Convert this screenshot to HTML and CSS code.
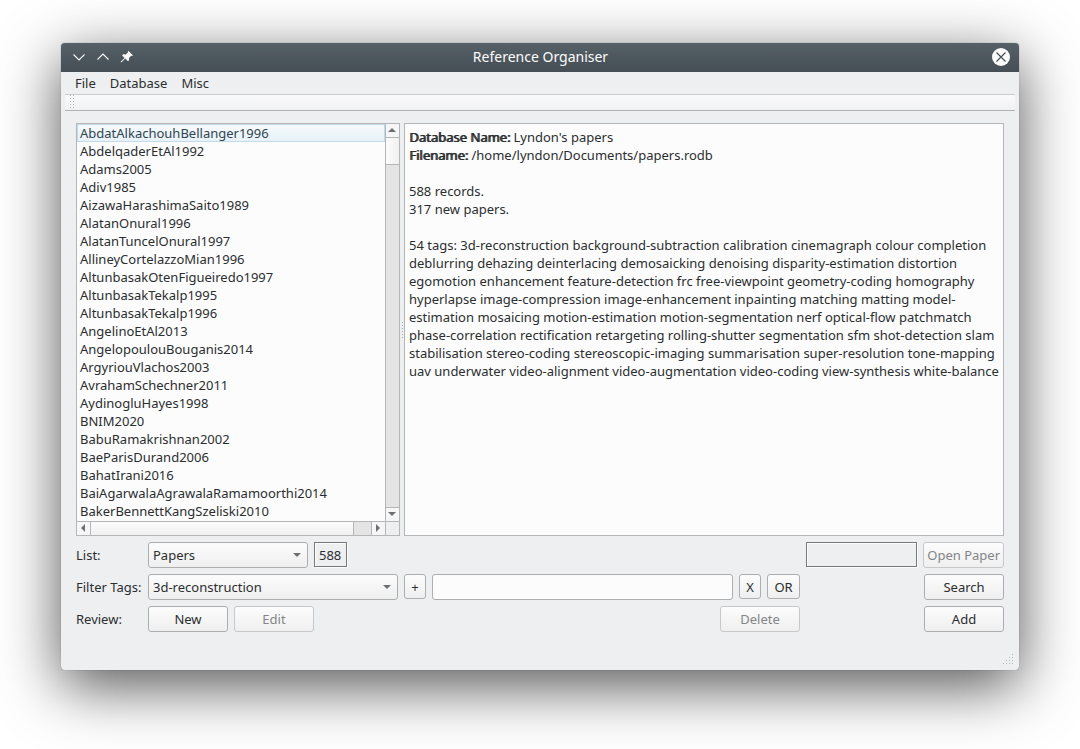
FILE: index.html
```html
<!DOCTYPE html>
<html lang="en">
<head>
<meta charset="utf-8">
<meta name="viewport" content="width=device-width, initial-scale=1">
<title>Reference Organiser</title>
<link rel="stylesheet" href="styles.css">
</head>
<body>
<main class="window">
  <header class="titlebar">
    <div class="title-actions">
      <button class="title-button" type="button" aria-label="Minimise"><svg width="16" height="16" viewBox="0 0 16 16"><path d="M2.5 5.5 8 11l5.500-5.500" fill="none" stroke="#fcfcfc" stroke-width="1.100"/></svg></button>
      <button class="title-button" type="button" aria-label="Maximise"><svg width="16" height="16" viewBox="0 0 16 16"><path d="M2.500 10.500 8 5l5.500 5.500" fill="none" stroke="#fcfcfc" stroke-width="1.100"/></svg></button>
      <button class="title-button" type="button" aria-label="Keep above"><svg width="16" height="16" viewBox="0 0 16 16"><path d="M9.600 2 14 6.400l-.9.700-.9-.4-2.200 2.200.1 2.300-1.100 1.100-2.700-2.700-3.700 3.700-.8.100.1-.8 3.700-3.700-2.500-2.500 1.100-1.100 2.600.1 2.300-2.200-.3-.6z" fill="#fcfcfc"/></svg></button>
    </div>
    <h1 class="title">Reference Organiser</h1>
    <div class="title-actions title-actions-end">
      <button class="title-button" type="button" aria-label="Close"><svg width="18" height="18" viewBox="0 0 18 18"><circle cx="9" cy="9" r="9" fill="#fcfcfc"/><path d="m4.500 4.500 9 9m0-9-9 9" fill="none" stroke="#475057" stroke-width="1.200"/></svg></button>
    </div>
  </header>
  <nav class="menubar">
    <button class="menu" type="button">File</button>
    <button class="menu" type="button">Database</button>
    <button class="menu" type="button">Misc</button>
  </nav>
  <div class="toolbar"><span class="toolbar-handle"></span></div>

  <div class="content">
    <div class="panels">
      <section class="list-panel" aria-label="Papers">
        <ul class="papers">
          <li class="paper current">AbdatAlkachouhBellanger1996</li>
          <li class="paper">AbdelqaderEtAl1992</li>
          <li class="paper">Adams2005</li>
          <li class="paper">Adiv1985</li>
          <li class="paper">AizawaHarashimaSaito1989</li>
          <li class="paper">AlatanOnural1996</li>
          <li class="paper">AlatanTuncelOnural1997</li>
          <li class="paper">AllineyCortelazzoMian1996</li>
          <li class="paper">AltunbasakOtenFigueiredo1997</li>
          <li class="paper">AltunbasakTekalp1995</li>
          <li class="paper">AltunbasakTekalp1996</li>
          <li class="paper">AngelinoEtAl2013</li>
          <li class="paper">AngelopoulouBouganis2014</li>
          <li class="paper">ArgyriouVlachos2003</li>
          <li class="paper">AvrahamSchechner2011</li>
          <li class="paper">AydinogluHayes1998</li>
          <li class="paper">BNIM2020</li>
          <li class="paper">BabuRamakrishnan2002</li>
          <li class="paper">BaeParisDurand2006</li>
          <li class="paper">BahatIrani2016</li>
          <li class="paper">BaiAgarwalaAgrawalaRamamoorthi2014</li>
          <li class="paper">BakerBennettKangSzeliski2010</li>
        </ul>
        <div class="scrollbar scrollbar-v">
          <button class="scroll-button" type="button" aria-label="Scroll up"><svg width="8" height="4" viewBox="0 0 8 4"><path d="M0 4 4 0l4 4z" fill="#6d7072"/></svg></button>
          <span class="thumb thumb-v"></span>
          <span class="track"></span>
          <button class="scroll-button" type="button" aria-label="Scroll down"><svg width="8" height="4" viewBox="0 0 8 4"><path d="M0 0h8L4 4z" fill="#6d7072"/></svg></button>
        </div>
        <div class="scrollbar scrollbar-h">
          <button class="scroll-button" type="button" aria-label="Scroll left"><svg width="4" height="8" viewBox="0 0 4 8"><path d="M4 0v8L0 4z" fill="#6d7072"/></svg></button>
          <span class="thumb thumb-h"></span>
          <span class="track track-h"></span>
          <button class="scroll-button" type="button" aria-label="Scroll right"><svg width="4" height="8" viewBox="0 0 4 8"><path d="M0 0v8l4-4z" fill="#6d7072"/></svg></button>
        </div>
        <span class="scroll-corner"></span>
      </section>
      <div class="splitter"><span class="splitter-dots"></span></div>
      <article class="details">
        <p class="line"><b class="key">Database Name:</b> Lyndon's papers</p>
        <p class="line"><b class="key">Filename:</b> /home/lyndon/Documents/papers.rodb</p>
        <p class="line spaced">588 records.</p>
        <p class="line">317 new papers.</p>
        <p class="line spaced">54 tags: 3d-reconstruction background-subtraction calibration cinemagraph colour completion deblurring dehazing deinterlacing demosaicking denoising disparity-estimation distortion egomotion enhancement feature-detection frc free-viewpoint geometry-coding homography hyperlapse image-compression image-enhancement inpainting matching matting model-estimation mosaicing motion-estimation motion-segmentation nerf optical-flow patchmatch phase-correlation rectification retargeting rolling-shutter segmentation sfm shot-detection slam stabilisation stereo-coding stereoscopic-imaging summarisation super-resolution tone-mapping uav underwater video-alignment video-augmentation video-coding view-synthesis white-balance</p>
      </article>
    </div>

    <form class="controls">
      <div class="row">
        <label class="label" for="list">List:</label>
        <div class="fields">
          <span class="combo combo-list">
            <select class="select" id="list"><option>Papers</option></select>
            <svg class="arrow" width="8" height="4" viewBox="0 0 8 4"><path d="M0 0h8L4 4z" fill="#6d7072"/></svg>
          </span>
          <output class="readout">588</output>
        </div>
        <div class="side">
          <output class="readout readout-wide" aria-label="Selected paper"></output>
          <button class="button" type="button" disabled>Open Paper</button>
        </div>
      </div>
      <div class="row">
        <label class="label" for="tags">Filter Tags:</label>
        <div class="fields">
          <span class="combo combo-tags">
            <select class="select" id="tags"><option>3d-reconstruction</option></select>
            <svg class="arrow" width="8" height="4" viewBox="0 0 8 4"><path d="M0 0h8L4 4z" fill="#6d7072"/></svg>
          </span>
          <button class="tool" type="button">+</button>
          <input class="query" type="text" aria-label="Filter">
          <button class="tool" type="button">X</button>
          <button class="tool tool-wide" type="button">OR</button>
        </div>
        <div class="side"><button class="button" type="button">Search</button></div>
      </div>
      <div class="row">
        <span class="label">Review:</span>
        <div class="fields">
          <button class="button" type="button">New</button>
          <button class="button" type="button" disabled>Edit</button>
          <button class="button push" type="button" disabled>Delete</button>
        </div>
        <div class="side"><button class="button" type="button">Add</button></div>
      </div>
    </form>
  </div>
  <footer class="statusbar">
    <svg width="10" height="10" viewBox="0 0 10 10" fill="#b3b5b7"><path d="M9 0h1v1H9zM9 3h1v1H9zM6 3h1v1H6zM9 6h1v1H9zM6 6h1v1H6zM3 6h1v1H3zM9 9h1v1H9zM6 9h1v1H6zM3 9h1v1H3zM0 9h1v1H0z"/></svg>
  </footer>
</main>
</body>
</html>
```

FILE: styles.css
```css
* {
  box-sizing: border-box;
}

body {
  display: flex;
  height: 100vh;
  min-height: 480px;
  margin: 0;
  padding: 43px 61px 79px;
  background: #fff;
  color: #2b2e30;
  font: 13px/18px "Noto Sans", sans-serif;
}

button,
input,
select {
  margin: 0;
  color: inherit;
  font: inherit;
}

.window {
  display: flex;
  flex: 1;
  flex-direction: column;
  min-width: 0;
  border-radius: 4px;
  background: #eeeff1;
  box-shadow: 0 0 1px rgba(0, 0, 0, 0.5), 0 16px 60px rgba(0, 0, 0, 0.68);
}

.titlebar {
  display: grid;
  grid-template-columns: 1fr auto 1fr;
  align-items: center;
  height: 29px;
  padding: 0 9px 2px 10px;
  border-radius: 4px 4px 0 0;
  background: linear-gradient(#566067, #454e55);
  color: #fcfcfc;
}

.title {
  margin: 0;
  font-size: 14px;
  font-weight: 400;
}

.title-actions {
  display: flex;
  align-items: center;
  gap: 8px;
}

.title-actions-end {
  justify-content: flex-end;
}

.title-button {
  display: flex;
  padding: 0;
  border: 0;
  background: none;
}

.menubar {
  display: flex;
  gap: 14px;
  height: 22px;
  padding: 0 14px;
}

.menu {
  padding: 0;
  border: 0;
  background: none;
}

.toolbar {
  height: 17px;
  margin: 0 4px;
  padding: 0 5px;
  border: solid #c9cbcc;
  border-width: 1px 0;
  border-bottom-color: #b0b2b4;
  background: linear-gradient(#fafafb, #f0f1f3);
}

.toolbar-handle {
  display: block;
  width: 4px;
  height: 100%;
  background:
    repeating-linear-gradient(#b4b6b8 0 1px, transparent 1px 3px) 0 0 / 1px 100% no-repeat,
    repeating-linear-gradient(#b4b6b8 0 1px, transparent 1px 3px) 3px 0 / 1px 100% no-repeat;
}

.content {
  display: flex;
  flex: 1;
  flex-direction: column;
  gap: 6px;
  min-height: 0;
  padding: 12px 15px 0;
}

.panels {
  display: grid;
  flex: 1;
  grid-template-columns: 324px 4px 1fr;
  min-height: 0;
}

.list-panel {
  display: grid;
  grid-template-rows: minmax(0, 1fr) 14px;
  grid-template-columns: minmax(0, 1fr) 14px;
  min-height: 0;
  border: 1px solid #b4b6b8;
  background: #fcfcfc;
}

.papers {
  margin: 0;
  padding: 0;
  overflow: hidden;
  list-style: none;
}

.paper {
  padding: 0 3px;
  line-height: 18px;
  white-space: nowrap;
}

.current {
  background: linear-gradient(#f6fafc, #e6f1f7);
  box-shadow: inset 0 0 0 1px #c3dcea;
  color: #31454f;
}

.scrollbar {
  display: flex;
  border: 0 solid #b4b6b8;
}

.scrollbar-v {
  flex-direction: column;
  border-left-width: 1px;
}

.scrollbar-h {
  border-top-width: 1px;
}

.scroll-button {
  display: flex;
  flex: 0 0 13px;
  align-items: center;
  justify-content: center;
  padding: 0 1px 1px 0;
  border: 0;
  background: #f6f6f7;
}

.thumb {
  border: 0 solid #b4b6b8;
}

.thumb-v {
  height: 28px;
  border-width: 1px 0;
  background: linear-gradient(90deg, #fcfcfc, #f0f0f0);
}

.thumb-h {
  flex: 1;
  border-width: 0 1px;
  background: linear-gradient(#fcfcfc, #f0f0f0);
}

.track {
  flex: 1;
  border-bottom: 1px solid #b4b6b8;
  background: #e4e4e4;
}

.track-h {
  flex: 0 0 18px;
  border-right: 1px solid #b4b6b8;
  border-bottom: 0;
}

.scroll-corner {
  border: solid #b4b6b8;
  border-width: 1px 0 0 1px;
  background: #eeeff1;
}

.splitter {
  display: flex;
  align-items: center;
  justify-content: center;
}

.splitter-dots {
  width: 1px;
  height: 16px;
  background: repeating-linear-gradient(#a8aaac 0 1px, transparent 1px 3px);
}

.details {
  min-width: 0;
  overflow: hidden;
  padding: 4px;
  border: 1px solid #b4b6b8;
  background: #fcfcfc;
}

.line {
  margin: 0;
}

.spaced {
  margin-top: 18px;
}

.key {
  font-weight: 400;
  text-shadow: 1px 0 currentColor;
}

.controls {
  display: flex;
  flex-direction: column;
  gap: 6px;
}

.row {
  display: grid;
  grid-template-columns: 66px minmax(0, 1fr) 198px;
  gap: 6px;
  height: 26px;
}

.label {
  line-height: 26px;
  white-space: nowrap;
}

.fields,
.side {
  display: flex;
  gap: 6px;
}

.side {
  justify-content: flex-end;
}

.combo {
  position: relative;
}

.combo-list {
  width: 160px;
}

.combo-tags {
  width: 250px;
}

.button,
.tool,
.select {
  border: 1px solid #acaeaf;
  border-radius: 3px;
  background: linear-gradient(#fcfcfc, #efefef);
}

.select {
  width: 100%;
  height: 26px;
  padding: 0 4px;
  appearance: none;
}

.arrow {
  position: absolute;
  top: 11px;
  right: 7px;
  pointer-events: none;
}

.button {
  min-width: 80px;
  padding: 0 3px;
}

.button:disabled {
  border-color: #c6c8c9;
  color: #838587;
}

.push {
  margin-left: auto;
}

.tool {
  width: 22px;
  height: 25px;
  padding: 0;
}

.tool-wide {
  width: 33px;
}

.query {
  flex: 1;
  min-width: 0;
  padding: 0 4px;
  border: 1px solid #acaeaf;
  border-radius: 3px;
  background: #fcfcfc;
}

.readout {
  min-width: 33px;
  height: 25px;
  padding: 0 4px;
  border: 1px solid #77797b;
  box-shadow: 1px 1px #fcfcfc, inset 1px 1px #fcfcfc;
  line-height: 24px;
}

.readout-wide {
  flex: 1;
}

.statusbar {
  display: flex;
  align-items: flex-end;
  justify-content: flex-end;
  height: 38px;
  padding: 6px;
}
```
